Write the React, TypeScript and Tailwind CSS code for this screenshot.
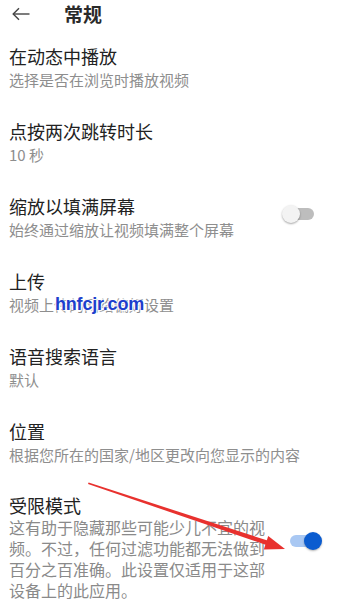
type Setting = {
  id: string;
  title: string;
  subtitle: string;
  toggle?: 'on' | 'off';
};

const settings: Setting[] = [
  { id: 'autoplay', title: '在动态中播放', subtitle: '选择是否在浏览时播放视频' },
  { id: 'seek', title: '点按两次跳转时长', subtitle: '10 秒' },
  { id: 'zoom', title: '缩放以填满屏幕', subtitle: '始终通过缩放让视频填满整个屏幕', toggle: 'off' },
  { id: 'upload', title: '上传', subtitle: '视频上传的网络偏好设置' },
  { id: 'voice', title: '语音搜索语言', subtitle: '默认' },
  { id: 'location', title: '位置', subtitle: '根据您所在的国家/地区更改向您显示的内容' },
];

const Toggle = ({ on }: { on: boolean }) => (
  <div className="relative w-[34px] h-[18px] shrink-0">
    <div
      className={
        on
          ? 'absolute left-[2px] right-[4px] top-[3px] h-[12px] rounded-full bg-[#a9c8f3]'
          : 'absolute left-[4px] right-[2px] top-[3px] h-[12px] rounded-full bg-[#bdbdbd]'
      }
    />
    <div
      className={
        on
          ? 'absolute right-0 top-0 w-[18px] h-[18px] rounded-full bg-[#0b5cd0] shadow-[0_1px_2px_rgba(0,0,0,0.3)]'
          : 'absolute left-0 top-0 w-[18px] h-[18px] rounded-full bg-[#f3f3f3] shadow-[0_1px_2px_rgba(0,0,0,0.35)]'
      }
    />
  </div>
);

export default function App() {
  return (
    <div
      className="relative w-[350px] h-[602px] overflow-hidden bg-white"
      style={{ fontFamily: '"Noto Sans CJK SC", "Noto Sans", sans-serif' }}
    >
      {/* Header */}
      <div className="flex items-center h-[28px] pl-[12px]">
        <svg width="18" height="14" viewBox="0 0 18 14" fill="none" stroke="#444" strokeWidth="1.4">
          <path d="M17.5 7H1.2" />
          <path d="M7 1.2 1.2 7 7 12.8" />
        </svg>
        <h1 className="ml-[34px] text-[19px] leading-[28px] font-bold text-[#2a2a2a]">常规</h1>
      </div>

      {/* List */}
      <div className="mt-[16px] flex flex-col gap-[29px] pl-[9px]">
        {settings.map((s) => (
          <div key={s.id} className="flex items-start justify-between">
            <div>
              <div className="text-[18px] leading-[24px] text-[#222]">{s.title}</div>
              <div className="mt-[2px] text-[15px] leading-[20px] text-[#8e8e8e]">{s.subtitle}</div>
            </div>
            {s.toggle && (
              <div className="mt-[11px] mr-[34px]">
                <Toggle on={s.toggle === 'on'} />
              </div>
            )}
          </div>
        ))}

        <div className="flex items-start justify-between">
          <div>
            <div className="text-[18px] leading-[23px] text-[#222]">受限模式</div>
            <p className="w-[262px] text-[16px] leading-[21px] text-[#8a8a8a]">
              这有助于隐藏那些可能少儿不宜的视频。不过，任何过滤功能都无法做到百分之百准确。此设置仅适用于这部设备上的此应用。
            </p>
          </div>
          <div className="mt-[38px] mr-[28px]">
            <Toggle on />
          </div>
        </div>
      </div>

      {/* Watermark */}
      <div
        className="absolute left-[55px] top-[295px] text-[18px] leading-[18px] font-bold text-[#1d3fcc] tracking-[-0.2px]"
        style={{
          fontFamily: '"Liberation Sans", Arial, sans-serif',
          textShadow: '0 0 2px #fff, 0 0 3px #fff, 1px 1px 1px #fff, -1px -1px 1px #fff',
        }}
      >
        hnfcjr.com
      </div>

      {/* Annotation arrow */}
      <svg className="absolute inset-0 pointer-events-none" width="350" height="602" viewBox="0 0 350 602">
        <polygon points="88,484 88.6,482.6 267.5,540.5 266.3,545" fill="#e8312e" />
        <polygon points="285,549 263.8,549.4 268.2,536" fill="#e8312e" />
      </svg>
    </div>
  );
}
